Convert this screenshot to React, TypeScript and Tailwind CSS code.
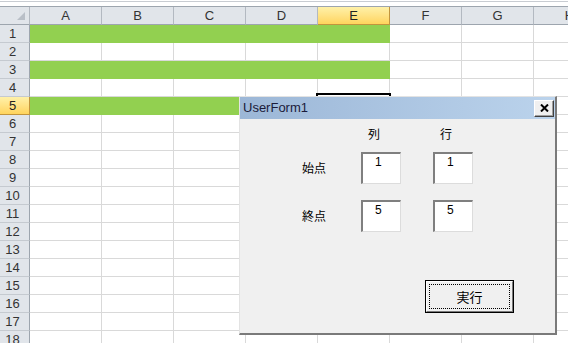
import React from 'react';

const COLS = ['A', 'B', 'C', 'D', 'E', 'F', 'G', 'H'];
const ROWS = Array.from({ length: 18 }, (_, i) => i + 1);
const GREEN_ROWS = new Set([1, 3, 5]);
const GREEN_COLS = new Set(['A', 'B', 'C', 'D', 'E']);

const SANS = { fontFamily: '"Liberation Sans", Arial, sans-serif' };
const JP = { fontFamily: '"Noto Sans CJK JP", "Liberation Sans", sans-serif' };

function ColHeader({ name }: { name: string }) {
  const sel = name === 'E';
  return (
    <div
      className={
        sel
          ? 'flex h-[18px] w-[72px] shrink-0 items-center justify-center border-r border-b border-[#c2953d] bg-gradient-to-b from-[#fff1a8] to-[#ffd45c] text-[13px] text-[#222]'
          : 'flex h-[18px] w-[72px] shrink-0 items-center justify-center border-r border-b border-r-[#b3b9c1] border-b-[#9da5ae] bg-[#e1e5ea] text-[13px] text-[#333]'
      }
    >
      {name}
    </div>
  );
}

function RowHeader({ n }: { n: number }) {
  const sel = n === 5;
  return (
    <div
      className={
        sel
          ? 'flex h-[18px] w-[30px] shrink-0 items-center justify-center border-r border-b border-[#c2953d] bg-gradient-to-b from-[#fff1a8] to-[#ffd45c] pr-[4px] text-[13px] text-[#222]'
          : 'flex h-[18px] w-[30px] shrink-0 items-center justify-center border-r border-b border-r-[#9da5ae] border-b-[#c5cad0] bg-[#e1e5ea] pr-[4px] text-[13px] text-[#333]'
      }
    >
      {n}
    </div>
  );
}

function Cell({ green }: { green: boolean }) {
  return (
    <div
      className={
        green
          ? 'h-[18px] w-[72px] shrink-0 border-r border-b border-[#92d050] bg-[#92d050]'
          : 'h-[18px] w-[72px] shrink-0 border-r border-b border-[#d9d9d9] bg-white'
      }
    />
  );
}

function TextBox({ value }: { value: string }) {
  return (
    <div
      className="h-[32px] w-[40px] border-t-2 border-l-2 border-r border-b border-t-[#7f7f7f] border-l-[#7f7f7f] border-r-[#dcdcdc] border-b-[#dcdcdc] bg-white pt-[1px] pl-[12px] text-[12px] leading-[14px] text-black"
      style={SANS}
    >
      {value}
    </div>
  );
}

function UserForm() {
  return (
    <div className="absolute top-[96px] left-[239px] flex h-[239px] w-[318px] flex-col border-t border-l border-r-2 border-b-2 border-t-[#e3e3e3] border-l-[#e3e3e3] border-r-[#7a7a7a] border-b-[#7a7a7a] bg-[#f0f0f0]">
      {/* title bar */}
      <div className="flex h-[22px] items-center justify-between bg-gradient-to-r from-[#9cb7d7] to-[#bbd3ec] pl-[3px] pr-[1px]">
        <span className="text-[13px] text-[#1b1b3a]" style={SANS}>
          UserForm1
        </span>
        <div className="flex h-[17px] w-[20px] items-center justify-center border border-t-white border-l-white border-r-[#404040] border-b-[#404040] bg-[#f0f0f0] shadow-[inset_-1px_-1px_0_#a0a0a0]">
          <svg width="9" height="8" viewBox="0 0 9 8">
            <path d="M1 0.5 L8 7.5 M8 0.5 L1 7.5" stroke="#000" strokeWidth="2" />
          </svg>
        </div>
      </div>

      {/* body */}
      <div className="flex flex-col pl-[62px] text-[12px] text-black" style={JP}>
        <div className="mt-[8px] flex h-[14px] items-center leading-[14px]">
          <span className="ml-[66px]">列</span>
          <span className="ml-[60px]">行</span>
        </div>
        <div className="mt-[11px] flex items-center">
          <span className="w-[59px] pb-[1px]">始点</span>
          <TextBox value="1" />
          <div className="w-[32px]" />
          <TextBox value="1" />
        </div>
        <div className="mt-[16px] flex items-center">
          <span className="w-[59px] pb-[1px]">終点</span>
          <TextBox value="5" />
          <div className="w-[32px]" />
          <TextBox value="5" />
        </div>
        <div className="mt-[48px] ml-[123px] h-[33px] w-[89px] border border-black">
          <div className="h-full w-full border border-t-white border-l-white border-r-[#7a7a7a] border-b-[#7a7a7a] p-[2px]">
            <div className="flex h-full w-full items-center justify-center border border-dotted border-black text-[13px]">
              実行
            </div>
          </div>
        </div>
      </div>
    </div>
  );
}

export default function App() {
  return (
    <div className="relative h-[343px] w-[568px] overflow-hidden bg-white" style={SANS}>
      <div className="h-[6px] border-b border-[#9da5ae] bg-white">
        <div className="mt-px h-px bg-[#c8ccd2]" />
      </div>
      <div className="flex">
        <div className="flex h-[18px] w-[30px] shrink-0 items-end justify-end border-r border-b border-r-[#b3b9c1] border-b-[#9da5ae] bg-[#e1e5ea] pr-[4px] pb-[4px]">
          <svg width="8" height="8" viewBox="0 0 8 8">
            <path d="M8 0 L8 8 L0 8 Z" fill="#b9bfc7" />
          </svg>
        </div>
        {COLS.map((c) => (
          <ColHeader key={c} name={c} />
        ))}
      </div>
      {ROWS.map((r) => (
        <div key={r} className="flex">
          <RowHeader n={r} />
          {COLS.map((c) => (
            <Cell key={c} green={GREEN_ROWS.has(r) && GREEN_COLS.has(c)} />
          ))}
        </div>
      ))}

      {/* active cell E5 */}
      <div className="absolute top-[93px] left-[316px] h-[22px] w-[75px] border-2 border-black" />

      <UserForm />
    </div>
  );
}
